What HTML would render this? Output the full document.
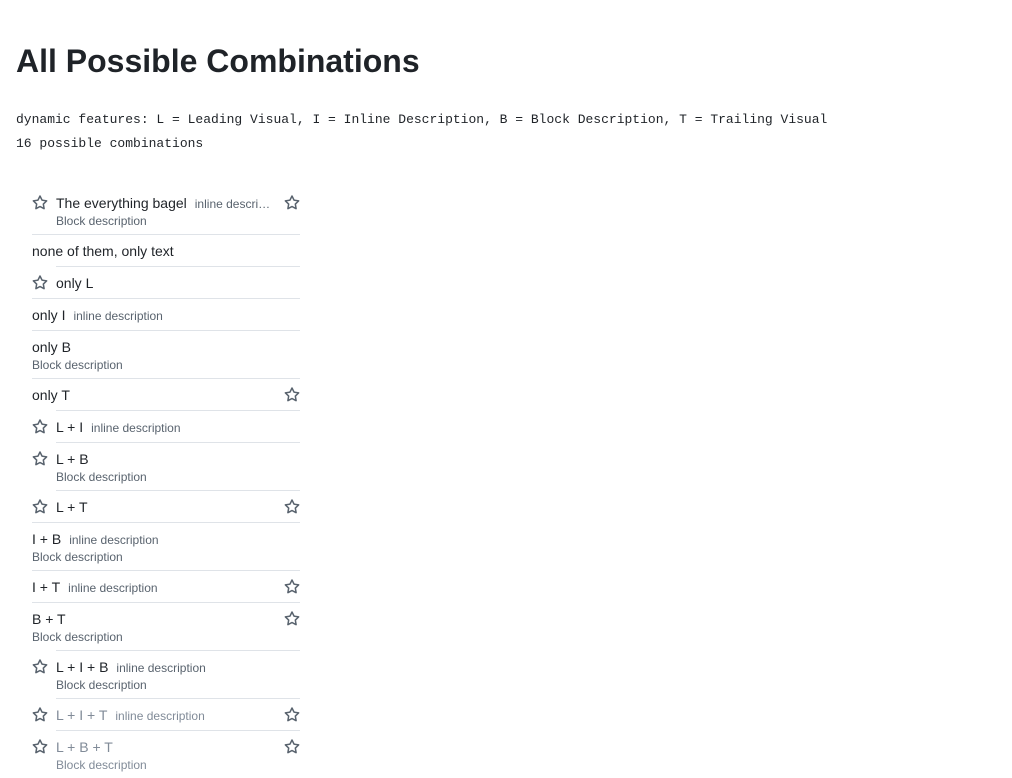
<!DOCTYPE html>
<html><head><style>
body{margin:0;background:#fff;font-family:"Liberation Sans",sans-serif;color:#1f2328;}
h1{position:absolute;left:16px;top:40px;margin:0;font-size:32px;font-weight:bold;line-height:42px;}
.mono{position:absolute;left:16px;font-family:"Liberation Mono",monospace;font-size:13px;line-height:20px;}
.list{position:absolute;left:32px;top:186px;width:268px;}
.it{position:relative;display:flex;}
.lead{width:24px;flex:none;padding-top:9px;}
.c{flex:1;border-top:1px solid #dfe3e8;padding:7px 0 6px;display:flex;min-width:0;}
.it:first-child .c{border-top:none;padding-top:8px;}
.m{flex:1;min-width:0;}
.row{display:flex;align-items:baseline;white-space:nowrap;height:18px;line-height:18px;font-size:14px;overflow:hidden;}
.in{font-size:12px;color:#59636e;margin-left:8px;overflow:hidden;text-overflow:ellipsis;}
.bl{font-size:12px;color:#59636e;line-height:16px;height:16px;position:relative;top:1px;}
.tr{width:16px;flex:none;margin-left:8px;padding-top:1px;}
.dis .row,.dis .in,.dis .bl{color:#818b98;}
svg{display:block}
</style></head><body>
<h1>All Possible Combinations</h1>
<div class="mono" style="top:110px">dynamic features: L = Leading Visual, I = Inline Description, B = Block Description, T = Trailing Visual</div>
<div class="mono" style="top:134px">16 possible combinations</div>
<svg width="0" height="0" style="position:absolute"><defs><symbol id="s" viewBox="0 0 16 16"><path fill="#59636e" d="M8 .25a.75.75 0 0 1 .673.418l1.882 3.815 4.21.612a.75.75 0 0 1 .416 1.279l-3.046 2.97.719 4.192a.751.751 0 0 1-1.088.791L8 12.347l-3.766 1.980a.75.75 0 0 1-1.088-.79l.72-4.194L.818 6.374a.75.75 0 0 1 .416-1.28l4.21-.611L7.327.668A.75.75 0 0 1 8 .25Zm0 2.445L6.615 5.5a.75.75 0 0 1-.564.41l-3.097.45 2.24 2.184a.75.75 0 0 1 .216.664l-.528 3.084 2.769-1.456a.75.75 0 0 1 .698 0l2.770 1.456-.53-3.084a.75.75 0 0 1 .216-.664l2.24-2.183-3.096-.45a.75.75 0 0 1-.564-.41L8 2.694Z"/></symbol></defs></svg>
<div class="list">
<div class="it"><div class="lead"><svg width="16" height="16"><use href="#s"/></svg></div><div class="c"><div class="m"><div class="row">The everything bagel<span class="in">inline description</span></div><div class="bl">Block description</div></div><div class="tr"><svg width="16" height="16"><use href="#s"/></svg></div></div></div>
<div class="it"><div class="c"><div class="m"><div class="row">none of them, only text</div></div></div></div>
<div class="it"><div class="lead"><svg width="16" height="16"><use href="#s"/></svg></div><div class="c"><div class="m"><div class="row">only L</div></div></div></div>
<div class="it"><div class="c"><div class="m"><div class="row">only I<span class="in">inline description</span></div></div></div></div>
<div class="it"><div class="c"><div class="m"><div class="row">only B</div><div class="bl">Block description</div></div></div></div>
<div class="it"><div class="c"><div class="m"><div class="row">only T</div></div><div class="tr"><svg width="16" height="16"><use href="#s"/></svg></div></div></div>
<div class="it"><div class="lead"><svg width="16" height="16"><use href="#s"/></svg></div><div class="c"><div class="m"><div class="row">L + I<span class="in">inline description</span></div></div></div></div>
<div class="it"><div class="lead"><svg width="16" height="16"><use href="#s"/></svg></div><div class="c"><div class="m"><div class="row">L + B</div><div class="bl">Block description</div></div></div></div>
<div class="it"><div class="lead"><svg width="16" height="16"><use href="#s"/></svg></div><div class="c"><div class="m"><div class="row">L + T</div></div><div class="tr"><svg width="16" height="16"><use href="#s"/></svg></div></div></div>
<div class="it"><div class="c"><div class="m"><div class="row">I + B<span class="in">inline description</span></div><div class="bl">Block description</div></div></div></div>
<div class="it"><div class="c"><div class="m"><div class="row">I + T<span class="in">inline description</span></div></div><div class="tr"><svg width="16" height="16"><use href="#s"/></svg></div></div></div>
<div class="it"><div class="c"><div class="m"><div class="row">B + T</div><div class="bl">Block description</div></div><div class="tr"><svg width="16" height="16"><use href="#s"/></svg></div></div></div>
<div class="it"><div class="lead"><svg width="16" height="16"><use href="#s"/></svg></div><div class="c"><div class="m"><div class="row">L + I + B<span class="in">inline description</span></div><div class="bl">Block description</div></div></div></div>
<div class="it dis"><div class="lead"><svg width="16" height="16"><use href="#s"/></svg></div><div class="c"><div class="m"><div class="row">L + I + T<span class="in">inline description</span></div></div><div class="tr"><svg width="16" height="16"><use href="#s"/></svg></div></div></div>
<div class="it dis"><div class="lead"><svg width="16" height="16"><use href="#s"/></svg></div><div class="c"><div class="m"><div class="row">L + B + T</div><div class="bl">Block description</div></div><div class="tr"><svg width="16" height="16"><use href="#s"/></svg></div></div></div>
</div>
</body></html>
